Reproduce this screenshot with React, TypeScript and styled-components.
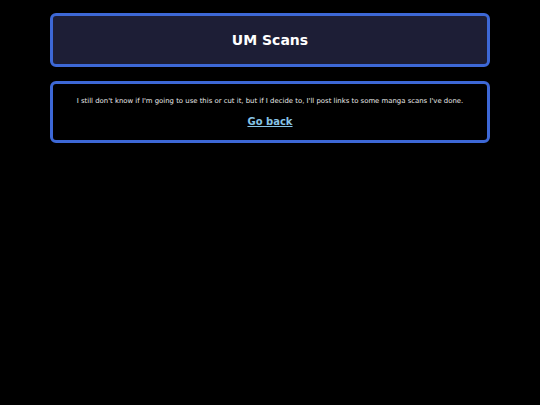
import React from 'react';
import styled, { createGlobalStyle } from 'styled-components';

const GlobalStyle = createGlobalStyle`
    html, body {
        margin: 0;
        padding: 0;
        background-color: #000;
    }
    body {
        font-family: "DejaVu Sans", Verdana, sans-serif;
        color: #fff;
    }
`;

const Page = styled.div`
    display: flex;
    flex-flow: column;
    align-items: center;
    gap: 14px;
    padding-top: 13px;
`;

const Panel = styled.section<{ $tone?: string }>`
    box-sizing: border-box;
    width: 440px;
    border: 3px solid #3d68d6;
    border-radius: 6px;
    background-color: ${(p) => p.$tone || '#000'};
    text-align: center;
`;

const Header = styled(Panel)`
    display: flex;
    justify-content: center;
    align-items: center;
    height: 54px;
`;

const Title = styled.h1`
    margin: 0;
    font-size: 14px;
    font-weight: bold;
    color: #fff;
`;

const Body = styled(Panel)`
    padding: 13px 10px 11px;
`;

const Note = styled.p`
    margin: 0 0 5px;
    font-size: 6.9px;
    color: #e8e8e8;
`;

const BackLink = styled.a`
    font-size: 10px;
    font-weight: bold;
    color: #87c3e6;
    text-decoration: underline;
`;

export default function App() {
    return (
        <>
            <GlobalStyle />
            <Page>
                <Header $tone="#1d1e36">
                    <Title>UM Scans</Title>
                </Header>
                <Body>
                    <Note>
                        I still don't know if I'm going to use this or cut it, but if I decide to, I'll post links to some manga scans I've done.
                    </Note>
                    <BackLink href="#">Go back</BackLink>
                </Body>
            </Page>
        </>
    );
}
